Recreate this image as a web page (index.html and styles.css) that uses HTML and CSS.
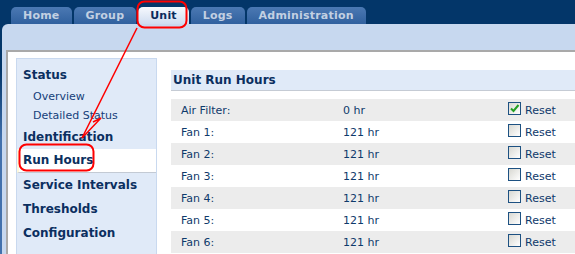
FILE: index.html
```html
<html>
  <head>
    <link rel="stylesheet" href="styles.css">
  </head>
  <body>
    <div class="topbar">
      <ul class="tabs">
        <li class="tab">Home</li>
        <li class="tab">Group</li>
        <li class="tab active">Unit</li>
        <li class="tab">Logs</li>
        <li class="tab">Administration</li>
      </ul>
    </div>

    <div class="frame">
      <div class="page">
        <!-- left menu -->
        <div class="sidebar">
          <a class="nav-item">Status</a>
          <a class="nav-sub">Overview</a>
          <a class="nav-sub">Detailed Status</a>
          <a class="nav-item">Identification</a>
          <a class="nav-item active">Run Hours</a>
          <a class="nav-item">Service Intervals</a>
          <a class="nav-item">Thresholds</a>
          <a class="nav-item">Configuration</a>
        </div>

        <!-- run hours table -->
        <div class="main">
          <h2 class="panel-title">Unit Run Hours</h2>
          <div class="rows">
            <div class="row">
              <span class="label">Air Filter:</span>
              <span class="value">0 hr</span>
              <span class="box checked">
                <svg width="11" height="11" viewBox="0 0 11 11"><path d="M2 5.5 L4.5 8 L9.5 2" fill="none" stroke="#23a023" stroke-width="2"/></svg>
              </span>
              <span class="reset">Reset</span>
            </div>
            <div class="row">
              <span class="label">Fan 1:</span>
              <span class="value">121 hr</span>
              <span class="box"></span>
              <span class="reset">Reset</span>
            </div>
            <div class="row">
              <span class="label">Fan 2:</span>
              <span class="value">121 hr</span>
              <span class="box"></span>
              <span class="reset">Reset</span>
            </div>
            <div class="row">
              <span class="label">Fan 3:</span>
              <span class="value">121 hr</span>
              <span class="box"></span>
              <span class="reset">Reset</span>
            </div>
            <div class="row">
              <span class="label">Fan 4:</span>
              <span class="value">121 hr</span>
              <span class="box"></span>
              <span class="reset">Reset</span>
            </div>
            <div class="row">
              <span class="label">Fan 5:</span>
              <span class="value">121 hr</span>
              <span class="box"></span>
              <span class="reset">Reset</span>
            </div>
            <div class="row">
              <span class="label">Fan 6:</span>
              <span class="value">121 hr</span>
              <span class="box"></span>
              <span class="reset">Reset</span>
            </div>
          </div>
        </div>
      </div>
    </div>

    <!-- red callout drawn over the page -->
    <svg class="notes" width="575" height="254">
      <rect x="137.5" y="1.5" width="49" height="26" rx="7" fill="none" stroke="#f00" stroke-width="2"/>
      <rect x="19.5" y="144.5" width="74" height="26" rx="7" fill="none" stroke="#f00" stroke-width="2"/>
      <path d="M137 28 L82 138" fill="none" stroke="#f00" stroke-width="1.5"/>
      <path d="M82 138 L101 118 L93 122" fill="none" stroke="#f00" stroke-width="1.5"/>
    </svg>
  </body>
</html>
```

FILE: styles.css
```css
body {
  margin: 0;
  width: 575px;
  height: 254px;
  overflow: hidden;
  background: linear-gradient(#033669 70px, #4271ad 140px);
  font-family: "DejaVu Sans", Verdana, sans-serif;
}

.topbar {
  height: 24px;
  padding-left: 11px;
  display: flex;
  align-items: flex-end;
  background: #033669;
}

.tabs {
  display: flex;
  gap: 2px;
  margin: 0;
  padding: 0;
  list-style: none;
}

.tab {
  height: 17px;
  line-height: 18px;
  padding: 0 12px;
  border-radius: 5px 5px 0 0;
  background: linear-gradient(#4b79b3, #30609e);
  color: #c2d0e2;
  font-size: 11px;
  font-weight: bold;
  letter-spacing: 0.2px;
}

.tab.active {
  background: linear-gradient(#f6f9fe, #cfdcf0);
  color: #0a2a5c;
}

.frame {
  margin-left: 2px;
  padding: 26px 0 0 4px;
  height: 204px;
  background: #c7d8ef;
  border-top-left-radius: 6px;
}

.page {
  display: flex;
  gap: 14px;
  height: 100%;
  padding: 6px 0 0 8px;
  background: #fff;
  border-top: 2px solid #a9a9a9;
  border-left: 2px solid #a9a9a9;
}

.sidebar {
  width: 141px;
  flex-shrink: 0;
  box-sizing: border-box;
  padding-top: 4px;
  background: #e0eaf8;
  border: 1px solid #c9d9ef;
  border-bottom: none;
}

.nav-item {
  display: block;
  height: 24px;
  line-height: 24px;
  padding-left: 6px;
  font-size: 12px;
  font-weight: bold;
  color: #0b2f60;
}

.nav-sub {
  display: block;
  height: 19px;
  line-height: 19px;
  padding-left: 16px;
  font-size: 11px;
  color: #15407a;
}

.nav-item.active {
  box-sizing: border-box;
  line-height: 23px;
  padding-left: 4px;
  background: #fff;
  border-left: 2px solid #fdf8dc;
  border-bottom: 1px solid #c3cad4;
}

.main {
  width: 420px;
  flex-shrink: 0;
  padding-top: 12px;
}

.panel-title {
  margin: 0;
  height: 20px;
  line-height: 21px;
  padding-left: 2px;
  background: #e0eaf8;
  border-bottom: 1px solid #c5cbd4;
  font-size: 12px;
  color: #0b2f60;
}

.rows {
  margin-top: 8px;
}

.row {
  display: flex;
  align-items: center;
  height: 22px;
  font-size: 11px;
  color: #0f3a6b;
}

.row:nth-child(odd) {
  background: #ececec;
}

.label {
  width: 162px;
  padding-left: 10px;
}

.value {
  width: 165px;
}

.box {
  width: 11px;
  height: 11px;
  margin-bottom: 3px;
  border: 1px solid #1d5182;
  background: linear-gradient(135deg, #d8d8d2, #fff);
}

.box svg {
  display: block;
}

.reset {
  margin-left: 4px;
}

.notes {
  position: absolute;
  top: 0;
  left: 0;
  pointer-events: none;
}
```
